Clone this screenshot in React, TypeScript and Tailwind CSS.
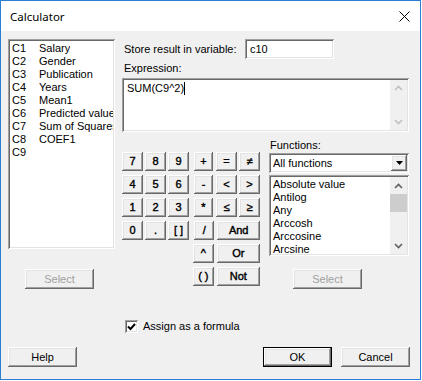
import React from 'react';

// classic Windows 3D edges
const RAISED =
    'bg-[#f0f0f0] shadow-[inset_-1px_-1px_#696969,inset_1px_1px_#ffffff,inset_-2px_-2px_#a0a0a0,inset_2px_2px_#e3e3e3]';
const SUNKEN =
    'bg-white shadow-[inset_1px_1px_#a0a0a0,inset_-1px_-1px_#ffffff,inset_2px_2px_#696969,inset_-2px_-2px_#e3e3e3]';

const COLUMNS: [string, string][] = [
    ['C1', 'Salary'],
    ['C2', 'Gender'],
    ['C3', 'Publication'],
    ['C4', 'Years'],
    ['C5', 'Mean1'],
    ['C6', 'Predicted value'],
    ['C7', 'Sum of Squares'],
    ['C8', 'COEF1'],
    ['C9', ''],
];

const FUNCTIONS = ['Absolute value', 'Antilog', 'Any', 'Arccosh', 'Arccosine', 'Arcsine'];

const Chevron: React.FC<{ up?: boolean; color: string }> = ({ up, color }) => (
    <svg width="9" height="6" viewBox="0 0 9 6">
        <polyline
            points={up ? '1,5 4.5,1.5 8,5' : '1,1 4.5,4.5 8,1'}
            fill="none"
            stroke={color}
            strokeWidth="1.6"
        />
    </svg>
);

const Key: React.FC<{ label: string; className?: string }> = ({ label, className = 'w-[21px]' }) => (
    <div
        className={`${RAISED} ${className} h-[19px] flex items-center justify-center text-[11px] [-webkit-text-stroke:0.4px_black]`}
    >
        {label}
    </div>
);

const Button: React.FC<{ label: string; disabled?: boolean; isDefault?: boolean; className?: string }> = ({
    label,
    disabled,
    isDefault,
    className = '',
}) => (
    <div
        className={`${RAISED} ${className} w-[69px] h-[20px] flex items-center justify-center text-[11px] ${
            disabled ? 'text-[#a0a0a0]' : 'text-black'
        } ${isDefault ? 'border border-black' : ''}`}
    >
        {label}
    </div>
);

export default function App() {
    return (
        <div className="w-[422px] h-[381px] bg-white overflow-hidden font-['Liberation_Sans',Arial,sans-serif] text-[11px] text-black">
            <div className="w-[421px] h-[380px] border border-[#2a7fd4] flex flex-col">
                {/* title bar */}
                <div className="h-[30px] bg-white flex items-center justify-between pl-[9px] pr-[10px] shrink-0">
                    <span className="font-['Noto_Sans',sans-serif] text-[11.5px] leading-none pt-[1px]">Calculator</span>
                    <svg width="11" height="11" viewBox="0 0 11 11">
                        <path d="M0.5 0.5 L10.5 10.5 M10.5 0.5 L0.5 10.5" stroke="#000" strokeWidth="1" />
                    </svg>
                </div>

                {/* dialog body */}
                <div className="flex-1 bg-[#f0f0f0] flex flex-col pt-[8px]">
                    <div className="flex">
                        {/* columns list */}
                        <div className="ml-[7px] w-[107px] flex flex-col">
                            <div className={`${SUNKEN} h-[210px] pt-[3px] pl-[4px] pr-[2px] overflow-hidden`}>
                                {COLUMNS.map(([c, name]) => (
                                    <div key={c} className="flex h-[13px] leading-[13px] whitespace-nowrap">
                                        <span className="w-[27px] shrink-0">{c}</span>
                                        <span className="overflow-hidden">{name}</span>
                                    </div>
                                ))}
                            </div>
                            <Button label="Select" disabled className="mt-[20px] ml-[17px]" />
                        </div>

                        {/* right side */}
                        <div className="ml-[7px] w-[287px] flex flex-col">
                            <div className="flex items-center h-[20px]">
                                <span className="w-[123px] pl-[2px]">Store result in variable:</span>
                                <div className={`${SUNKEN} w-[89px] h-[20px] flex items-center pl-[5px]`}>c10</div>
                            </div>
                            <div className="mt-[3px] leading-[13px] pl-[2px]">Expression:</div>
                            <div className={`${SUNKEN} mt-[3px] h-[54px] flex`}>
                                <div className="flex-1 pl-[5px] pt-[4px] leading-[13px] flex items-start">
                                    <span>SUM(C9^2)</span>
                                    <span className="inline-block w-px h-[13px] bg-black" />
                                </div>
                                <div className="w-[17px] my-[2px] mr-[2px] bg-[#f0f0f0] flex flex-col items-center justify-between py-[5px]">
                                    <Chevron up color="#c0c0c0" />
                                    <Chevron color="#c0c0c0" />
                                </div>
                            </div>

                            <div className="flex mt-[7px]">
                                {/* keypad */}
                                <div className="mt-[13px] flex flex-col gap-[4px] w-[138px]">
                                    <div className="flex">
                                        <div className="flex gap-[2px]"><Key label="7" /><Key label="8" /><Key label="9" /></div>
                                        <Key label="+" className="w-[21px] ml-[5px]" />
                                        <div className="flex gap-[2px] ml-[3px]"><Key label="=" /><Key label="≠" /></div>
                                    </div>
                                    <div className="flex">
                                        <div className="flex gap-[2px]"><Key label="4" /><Key label="5" /><Key label="6" /></div>
                                        <Key label="-" className="w-[21px] ml-[5px]" />
                                        <div className="flex gap-[2px] ml-[3px]"><Key label="<" /><Key label=">" /></div>
                                    </div>
                                    <div className="flex">
                                        <div className="flex gap-[2px]"><Key label="1" /><Key label="2" /><Key label="3" /></div>
                                        <Key label="*" className="w-[21px] ml-[5px]" />
                                        <div className="flex gap-[2px] ml-[3px]"><Key label="≤" /><Key label="≥" /></div>
                                    </div>
                                    <div className="flex">
                                        <div className="flex gap-[2px]"><Key label="0" /><Key label="." /><Key label="[ ]" /></div>
                                        <Key label="/" className="w-[21px] ml-[5px]" />
                                        <Key label="And" className="w-[44px] ml-[3px]" />
                                    </div>
                                    <div className="flex pl-[71px]">
                                        <Key label="^" />
                                        <Key label="Or" className="w-[44px] ml-[3px]" />
                                    </div>
                                    <div className="flex pl-[71px]">
                                        <Key label="( )" />
                                        <Key label="Not" className="w-[44px] ml-[3px]" />
                                    </div>
                                </div>

                                {/* functions */}
                                <div className="ml-[9px] w-[140px] flex flex-col">
                                    <div className="leading-[13px] pl-[1px]">Functions:</div>
                                    <div className={`${SUNKEN} mt-[1px] h-[20px] flex items-center`}>
                                        <span className="flex-1 pl-[4px]">All functions</span>
                                        <div className={`${RAISED} w-[16px] h-[16px] mr-[2px] flex items-center justify-center`}>
                                            <svg width="7" height="4" viewBox="0 0 7 4">
                                                <path d="M0 0 H7 L3.5 4 Z" fill="#000" />
                                            </svg>
                                        </div>
                                    </div>
                                    <div className={`${SUNKEN} mt-[2px] h-[81px] flex overflow-hidden`}>
                                        <div className="flex-1 pl-[4px] pt-[3px] whitespace-nowrap">
                                            {FUNCTIONS.map((f) => (
                                                <div key={f} className="h-[13px] leading-[13px]">{f}</div>
                                            ))}
                                        </div>
                                        <div className="w-[17px] my-[2px] mr-[2px] bg-[#f0f0f0] flex flex-col items-center">
                                            <div className="h-[17px] flex items-center justify-center">
                                                <Chevron up color="#606060" />
                                            </div>
                                            <div className="w-full h-[18px] bg-[#cdcdcd]" />
                                            <div className="flex-1" />
                                            <div className="h-[17px] flex items-center justify-center">
                                                <Chevron color="#606060" />
                                            </div>
                                        </div>
                                    </div>
                                    <Button label="Select" disabled className="mt-[13px] ml-[24px]" />
                                </div>
                            </div>
                        </div>
                    </div>

                    {/* assign checkbox */}
                    <div className="flex items-center mt-[31px] ml-[124px] h-[13px]">
                        <div className={`${SUNKEN} w-[13px] h-[13px] flex items-center justify-center`}>
                            <svg width="9" height="9" viewBox="0 0 9 9">
                                <path d="M1 4.5 L3.5 7 L8 2" fill="none" stroke="#000" strokeWidth="2" />
                            </svg>
                        </div>
                        <span className="ml-[5px]">Assign as a formula</span>
                    </div>

                    {/* dialog buttons */}
                    <div className="flex mt-[14px] ml-[7px]">
                        <Button label="Help" />
                        <Button label="OK" isDefault className="ml-[186px]" />
                        <Button label="Cancel" className="ml-[9px]" />
                    </div>
                </div>
            </div>
        </div>
    );
}
